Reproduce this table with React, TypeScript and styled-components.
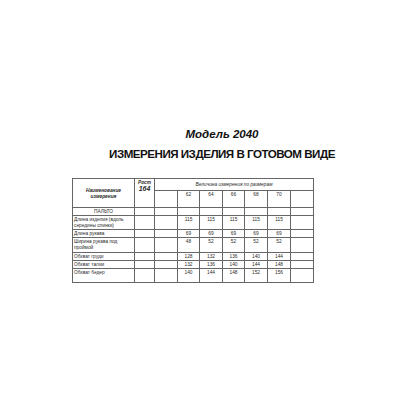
import React from "react";
import styled, { createGlobalStyle } from "styled-components";

const Global = createGlobalStyle`
  html, body { margin: 0; padding: 0; background: #ffffff; }
  body { font-family: "Liberation Sans", Arial, sans-serif; color: #222; }
`;

const Page = styled.div`
  width: 400px;
  height: 400px;
  display: flex;
  flex-direction: column;
  overflow: hidden;
`;

const Titles = styled.div`
  padding-left: 44px;
  padding-top: 127px;
  display: flex;
  flex-direction: column;
  align-items: center;
`;

const Model = styled.div`
  font-family: "Liberation Sans", Arial, sans-serif;
  font-weight: bold;
  font-style: italic;
  font-size: 11.5px;
  line-height: 14px;
  color: #111;
`;

const Heading = styled.div`
  font-family: "Liberation Sans", Arial, sans-serif;
  font-weight: bold;
  font-size: 11.6px;
  letter-spacing: -0.5px;
  line-height: 16px;
  margin-top: 5px;
  color: #111;
`;

const Table = styled.table`
  margin-left: 72px;
  margin-top: 16px;
  border-collapse: collapse;
  table-layout: fixed;
  width: 241px;
  font-family: "Liberation Sans", Arial, sans-serif;
  font-size: 4.8px;
  color: #2a2a2a;
`;

const Cell = styled.td<{ $h?: number; $align?: string; $valign?: string }>`
  border: 1px solid #666;
  padding: 1px 1px 0 1px;
  height: ${(p) => (p.$h ? `${p.$h}px` : "auto")};
  text-align: ${(p) => p.$align || "center"};
  vertical-align: ${(p) => p.$valign || "top"};
  line-height: 6px;
  overflow: hidden;
  box-sizing: border-box;
`;

const Italic = styled.span<{ $bold?: boolean; $size?: number }>`
  font-style: italic;
  font-weight: ${(p) => (p.$bold ? "bold" : "normal")};
  font-size: ${(p) => (p.$size ? `${p.$size}px` : "inherit")};
  display: block;
`;

const widths = [62, 20, 23, 22, 23, 22, 23, 23, 23];

const rows: { name: string; h: number; vals: string[] }[] = [
  { name: "Длина изделия (вдоль середины спинки)", h: 14, vals: ["115", "115", "115", "115", "115"] },
  { name: "Длина рукава", h: 8, vals: ["69", "69", "69", "69", "69"] },
  { name: "Ширина рукава под проймой", h: 15, vals: ["48", "52", "52", "52", "52"] },
  { name: "Обхват груди", h: 7, vals: ["128", "132", "136", "140", "144"] },
  { name: "Обхват талии", h: 7, vals: ["132", "136", "140", "144", "148"] },
  { name: "Обхват бедер", h: 14, vals: ["140", "144", "148", "152", "156"] },
];

export default function App() {
  return (
    <Page>
      <Global />
      <Titles>
        <Model>Модель 2040</Model>
        <Heading>ИЗМЕРЕНИЯ ИЗДЕЛИЯ В ГОТОВОМ ВИДЕ</Heading>
      </Titles>
      <Table>
        <colgroup>
          {widths.map((w, i) => (
            <col key={i} style={{ width: w }} />
          ))}
        </colgroup>
        <tbody>
          <tr>
            <Cell rowSpan={2} $valign="middle">
              <Italic $bold>Наименование</Italic>
              <Italic $bold>измерения</Italic>
            </Cell>
            <Cell rowSpan={2} $align="center">
              <Italic $bold>Рост</Italic>
              <Italic $bold $size={7}>164</Italic>
            </Cell>
            <Cell colSpan={7} $h={12} $valign="middle">
              <Italic>Величина измерения по размерам</Italic>
            </Cell>
          </tr>
          <tr>
            <Cell $h={17} />
            <Cell>62</Cell>
            <Cell>64</Cell>
            <Cell>66</Cell>
            <Cell>68</Cell>
            <Cell>70</Cell>
            <Cell />
          </tr>
          <tr>
            <Cell $h={8}>ПАЛЬТО</Cell>
            <Cell />
            <Cell />
            <Cell />
            <Cell />
            <Cell />
            <Cell />
            <Cell />
            <Cell />
          </tr>
          {rows.map((r) => (
            <tr key={r.name}>
              <Cell $h={r.h} $align="left">{r.name}</Cell>
              <Cell />
              <Cell />
              {r.vals.map((v, i) => (
                <Cell key={i}>{v}</Cell>
              ))}
              <Cell />
            </tr>
          ))}
        </tbody>
      </Table>
    </Page>
  );
}
